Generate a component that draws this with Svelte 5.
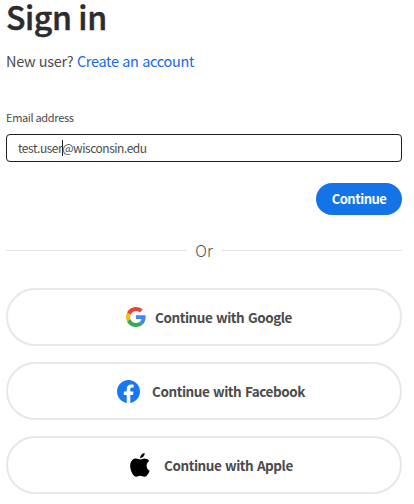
<script lang="ts">
  let before = 'test.user';
  let after = '@wisconsin.edu';

  const providers = ['Google', 'Facebook', 'Apple'];
</script>

<main class="sign-in">
  <h1>Sign in</h1>
  <p class="new-user">New user? <a href="#create">Create an account</a></p>

  <div class="label">Email address</div>
  <div class="field" role="textbox" tabindex="-1">
    <span>{before}</span><span class="caret"></span><span>{after}</span>
  </div>

  <div class="actions">
    <button class="continue">Continue</button>
  </div>

  <div class="divider"><span>Or</span></div>

  <div class="providers">
    {#each providers as provider}
      <button class="provider {provider.toLowerCase()}">
        {#if provider === 'Google'}
          <svg width="20" height="20" viewBox="0 0 48 48">
            <path fill="#EA4335" d="M24 9.5c3.54 0 6.71 1.22 9.21 3.6l6.85-6.85C35.9 2.38 30.47 0 24 0 14.62 0 6.51 5.38 2.56 13.22l7.98 6.19C12.43 13.72 17.74 9.5 24 9.5z" />
            <path fill="#4285F4" d="M46.98 24.55c0-1.57-.15-3.09-.38-4.55H24v9.02h12.94c-.58 2.96-2.26 5.48-4.78 7.18l7.73 6c4.51-4.18 7.09-10.36 7.09-17.65z" />
            <path fill="#FBBC05" d="M10.53 28.59A14.5 14.5 0 0 1 9.77 24c0-1.6.27-3.14.76-4.59l-7.98-6.19A23.9 23.9 0 0 0 0 24c0 3.88.92 7.54 2.56 10.78l7.97-6.19z" />
            <path fill="#34A853" d="M24 48c6.48 0 11.93-2.13 15.89-5.81l-7.73-6c-2.15 1.45-4.92 2.3-8.16 2.3-6.26 0-11.57-4.22-13.47-9.91l-7.98 6.19C6.51 42.62 14.62 48 24 48z" />
          </svg>
        {:else if provider === 'Facebook'}
          <svg width="23" height="23" viewBox="0 0 24 24">
            <path fill="#1877F2" d="M24 12.07C24 5.4 18.63 0 12 0S0 5.4 0 12.07c0 6.03 4.39 11.02 10.13 11.93v-8.44H7.08v-3.49h3.05V9.41c0-3.02 1.79-4.69 4.53-4.69 1.31 0 2.68.24 2.68.24v2.97h-1.51c-1.49 0-1.96.93-1.96 1.89v2.25h3.33l-.53 3.49h-2.8V24C19.61 23.09 24 18.1 24 12.07z" />
          </svg>
        {:else}
          <svg width="20" height="24" viewBox="0 0 20 24">
            <path d="M16.6 12.8c0-2.3 1.2-3.8 2.6-4.8-1.2-1.6-3-2.4-4.7-2.4-1.9 0-3.1 1-4.2 1-1.3 0-2.5-1-4.3-1C2.9 5.6.2 8.2.2 13c0 5 3.3 10.8 5.9 10.8 1.5 0 2.3-1 4.1-1s2.5 1 4.1 1c2.2 0 4.4-3.3 5.3-6.1-1.9-.8-3-2.7-3-4.9zM10.3 5.2C10 2.5 12.2.4 14.6.1c.3 2.6-1.8 4.9-4.3 5.1z" />
          </svg>
        {/if}
        <span class="text">Continue with {provider}</span>
      </button>
    {/each}
  </div>
</main>

<style>
  :global(body) {
    margin: 0;
    background: #fff;
  }

  .sign-in {
    box-sizing: border-box;
    width: 414px;
    height: 504px;
    padding: 0 12px 0 6px;
    color: #4b4b4b;
    font-family: "Noto Sans CJK SC", "Noto Sans", sans-serif;
    white-space: nowrap;
  }

  h1 {
    margin: 0;
    height: 36px;
    color: #2c2c2c;
    font-size: 32px;
    font-weight: 500;
    letter-spacing: -0.4px;
    line-height: 32px;
    -webkit-text-stroke: 0.5px #2c2c2c;
  }

  .new-user {
    margin: 13px 0 0;
    font-size: 14.5px;
    letter-spacing: -0.35px;
    word-spacing: 0.8px;
    line-height: 24px;
  }

  a {
    color: #1668e8;
    text-decoration: none;
  }

  .label {
    margin-top: 35px;
    height: 18px;
    font-size: 11px;
    letter-spacing: -0.33px;
    line-height: 18px;
  }

  .field {
    display: flex;
    align-items: center;
    box-sizing: border-box;
    height: 28px;
    margin-top: 8px;
    padding-left: 11px;
    border: 1px solid #1e1e1e;
    border-radius: 4px;
    font-size: 12px;
    letter-spacing: -0.48px;
    line-height: 18px;
  }

  .caret {
    width: 1px;
    height: 16px;
    margin-right: -1px;
    background: #222;
  }

  .actions {
    display: flex;
    justify-content: flex-end;
    margin-top: 21px;
  }

  button {
    padding: 0;
    font-family: inherit;
    font-weight: bold;
    letter-spacing: -0.5px;
  }

  .continue {
    width: 86px;
    height: 32px;
    padding-bottom: 2px;
    border: none;
    border-radius: 16px;
    background: #1473e6;
    color: #fff;
    font-size: 13px;
  }

  .divider {
    display: flex;
    align-items: center;
    gap: 8px;
    height: 24px;
    margin-top: 23px;
    font-size: 16px;
    font-weight: 300;
    line-height: 24px;
  }

  .divider::before,
  .divider::after {
    content: '';
    flex: 1;
    height: 1px;
    background: #e4e4e4;
  }

  .providers {
    display: flex;
    flex-direction: column;
    gap: 16px;
    margin-top: 26px;
  }

  .provider {
    display: flex;
    align-items: center;
    box-sizing: border-box;
    height: 58px;
    border: 2px solid #e8e8e8;
    border-radius: 29px;
    background: #fff;
    color: #4b4b4b;
    font-size: 13.5px;
    letter-spacing: -0.44px;
    word-spacing: 1px;
    line-height: 20px;
  }

  .google {
    padding-left: 118px;
    gap: 9px;
  }

  .facebook {
    padding-left: 109px;
    gap: 12px;
  }

  .apple {
    padding-left: 122px;
    gap: 14px;
  }
</style>
